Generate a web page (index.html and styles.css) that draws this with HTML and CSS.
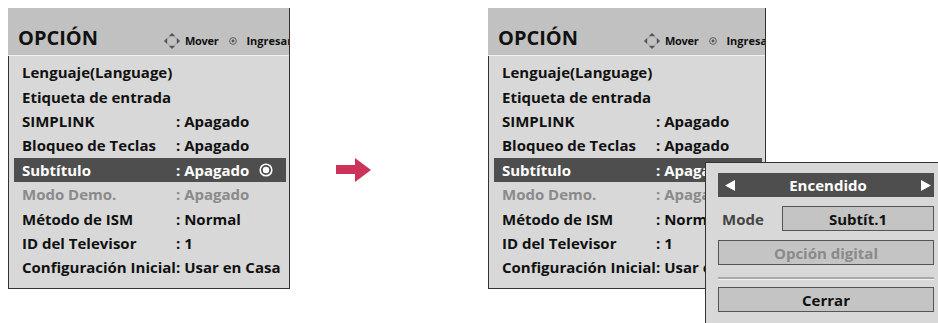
FILE: index.html
```html
<!DOCTYPE html>
<html lang="es">
	<head>
		<meta charset="UTF-8" />
		<meta name="viewport" content="width=device-width, initial-scale=1.0" />
		<title>Opción - Subtítulo</title>
		<link rel="stylesheet" href="styles.css">
	</head>
	<body>
		<div class="scene">
			<!-- menú antes -->
			<div class="menu">
				<div class="menu-head">
					<span class="menu-title">OPCIÓN</span>
					<span class="hint">
						<svg class="ico-move" width="16" height="16" viewBox="0 0 16 16">
							<circle cx="8" cy="8" r="5" fill="none" stroke="#9a9a9a" stroke-width="1" />
							<polygon points="8,0 11,3 5,3" fill="#555" />
							<polygon points="8,16 11,13 5,13" fill="#555" />
							<polygon points="0,8 3,5 3,11" fill="#555" />
							<polygon points="16,8 13,5 13,11" fill="#555" />
						</svg>Mover
					</span>
					<span class="hint hint-ok">
						<svg class="ico-ok" width="8" height="8" viewBox="0 0 8 8">
							<circle cx="4" cy="4" r="3.4" fill="none" stroke="#555" stroke-width="0.9" />
							<circle cx="4" cy="4" r="1.4" fill="#555" />
						</svg>Ingresar
					</span>
				</div>
				<ul class="menu-list">
					<li><span class="lbl">Lenguaje(Language)</span></li>
					<li><span class="lbl">Etiqueta de entrada</span></li>
					<li><span class="lbl">SIMPLINK</span><span class="val">: Apagado</span></li>
					<li><span class="lbl">Bloqueo de Teclas</span><span class="val">: Apagado</span></li>
					<li class="sel">
						<span class="lbl">Subtítulo</span><span class="val">: Apagado</span>
						<svg class="ico-ring" width="14" height="14" viewBox="0 0 14 14">
							<circle cx="7" cy="7" r="5.8" fill="none" stroke="#fff" stroke-width="1.6" />
							<circle cx="7" cy="7" r="3.2" fill="#fff" />
						</svg>
					</li>
					<li class="off"><span class="lbl">Modo Demo.</span><span class="val">: Apagado</span></li>
					<li><span class="lbl">Método de ISM</span><span class="val">: Normal</span></li>
					<li><span class="lbl">ID del Televisor</span><span class="val">: 1</span></li>
					<li><span class="lbl">Configuración Inicial</span><span class="val">: Usar en Casa</span></li>
				</ul>
			</div>

			<div class="arrow">
				<svg width="36" height="24" viewBox="0 0 36 24">
					<polygon points="0,7 19,7 19,0 35,12 19,24 19,16 0,16" fill="#cc3358" />
				</svg>
			</div>

			<!-- menú después -->
			<div class="menu menu-b">
				<div class="menu-head">
					<span class="menu-title">OPCIÓN</span>
					<span class="hint">
						<svg class="ico-move" width="16" height="16" viewBox="0 0 16 16">
							<circle cx="8" cy="8" r="5" fill="none" stroke="#9a9a9a" stroke-width="1" />
							<polygon points="8,0 11,3 5,3" fill="#555" />
							<polygon points="8,16 11,13 5,13" fill="#555" />
							<polygon points="0,8 3,5 3,11" fill="#555" />
							<polygon points="16,8 13,5 13,11" fill="#555" />
						</svg>Mover
					</span>
					<span class="hint hint-ok">
						<svg class="ico-ok" width="8" height="8" viewBox="0 0 8 8">
							<circle cx="4" cy="4" r="3.4" fill="none" stroke="#555" stroke-width="0.9" />
							<circle cx="4" cy="4" r="1.4" fill="#555" />
						</svg>Ingresar
					</span>
				</div>
				<ul class="menu-list">
					<li><span class="lbl">Lenguaje(Language)</span></li>
					<li><span class="lbl">Etiqueta de entrada</span></li>
					<li><span class="lbl">SIMPLINK</span><span class="val">: Apagado</span></li>
					<li><span class="lbl">Bloqueo de Teclas</span><span class="val">: Apagado</span></li>
					<li class="sel"><span class="lbl">Subtítulo</span><span class="val">: Apagado</span></li>
					<li class="off"><span class="lbl">Modo Demo.</span><span class="val">: Apagado</span></li>
					<li><span class="lbl">Método de ISM</span><span class="val">: Normal</span></li>
					<li><span class="lbl">ID del Televisor</span><span class="val">: 1</span></li>
					<li><span class="lbl">Configuración Inicial</span><span class="val">: Usar en Casa</span></li>
				</ul>
			</div>

			<!-- ventana emergente de subtítulo -->
			<div class="popup">
				<div class="pick">
					<svg width="10" height="11" viewBox="0 0 10 11"><polygon points="0,5.5 10,0 10,11" fill="#fff" /></svg>
					<span class="pick-txt">Encendido</span>
					<svg width="10" height="11" viewBox="0 0 10 11"><polygon points="10,5.5 0,0 0,11" fill="#fff" /></svg>
				</div>
				<div class="mode-row">
					<span class="mode-lbl">Mode</span>
					<span class="box mode-box">Subtít.1</span>
				</div>
				<div class="box box-off">Opción digital</div>
				<div class="sep"></div>
				<div class="box">Cerrar</div>
			</div>
		</div>
	</body>
</html>
```

FILE: styles.css
```css
* {
	margin: 0;
	padding: 0;
}
html,
body {
	background-color: #fff;
	overflow: hidden;
}
.scene {
	position: relative;
	width: 938px;
	height: 323px;
	display: flex;
	align-items: flex-start;
	padding: 8px 0 0 8px;
	box-sizing: border-box;
	overflow: hidden;
	font-family: "Open Sans", "DejaVu Sans", sans-serif;
	font-weight: 700;
	color: #111;
}
.menu {
	width: 282px;
	flex: none;
	border-right: 1px solid #333;
	box-sizing: border-box;
	overflow: hidden;
}
.menu-b {
	width: 278px;
}
.menu-head {
	height: 48px;
	background-color: #c1c1c1;
	border-bottom: 1px solid #f2f2f2;
	display: flex;
	align-items: baseline;
	padding: 17px 0 0 10px;
	box-sizing: border-box;
	white-space: nowrap;
}
.menu-title {
	width: 146px;
	flex: none;
	font-size: 20px;
	line-height: 26px;
}
.hint {
	font-size: 11px;
	line-height: 14px;
	letter-spacing: -0.3px;
	color: #111;
}
.hint-ok {
	margin-left: 11px;
	letter-spacing: 0;
}
.ico-move {
	vertical-align: -4px;
	margin-right: 5px;
}
.ico-ok {
	vertical-align: 0;
	margin-right: 9px;
}
.menu-list {
	list-style: none;
	background-color: #d8d8d8;
	border-left: 1px solid #333;
	border-bottom: 1px solid #333;
	padding: 4px 3px 8px 5px;
}
.menu-list li {
	display: flex;
	align-items: center;
	height: 24.4px;
	padding-left: 8px;
	font-size: 15px;
	white-space: nowrap;
}
.lbl {
	min-width: 154px;
}
.menu-list li.sel {
	background-color: #4e4e4e;
	color: #fff;
}
.menu-list li.off {
	color: #8a8a8a;
}
.ico-ring {
	margin-left: 10px;
}
.arrow {
	width: 198px;
	flex: none;
	padding: 150px 0 0 46px;
	box-sizing: border-box;
}
.arrow svg {
	display: block;
}
/* ventana emergente encima del menú */
.popup {
	position: absolute;
	left: 705px;
	top: 162px;
	width: 240px;
	height: 161px;
	background-color: #d8d8d8;
	border: 1px solid #333;
	border-width: 1px 0 0 1px;
	padding: 10px 0 0 12px;
	box-sizing: border-box;
	font-size: 15px;
}
.pick {
	width: 216px;
	height: 24px;
	background-color: #4e4e4e;
	color: #fff;
	display: flex;
	align-items: center;
	justify-content: space-between;
	padding: 0 3px 0 7px;
	box-sizing: border-box;
}
.mode-row {
	display: flex;
	align-items: center;
	margin-top: 9px;
	width: 216px;
}
.mode-lbl {
	width: 64px;
	padding-left: 4px;
	box-sizing: border-box;
	color: #444;
}
.box {
	width: 216px;
	height: 25px;
	background-color: #c4c4c4;
	border: 1px solid #555;
	box-sizing: border-box;
	display: flex;
	align-items: center;
	justify-content: center;
}
.mode-box {
	width: 152px;
}
.box-off {
	margin-top: 9px;
	color: #8a8a8a;
}
.sep {
	width: 216px;
	height: 2px;
	background-color: #aaa;
	border-bottom: 1px solid #f0f0f0;
	margin: 12px 0 7px;
}
```
